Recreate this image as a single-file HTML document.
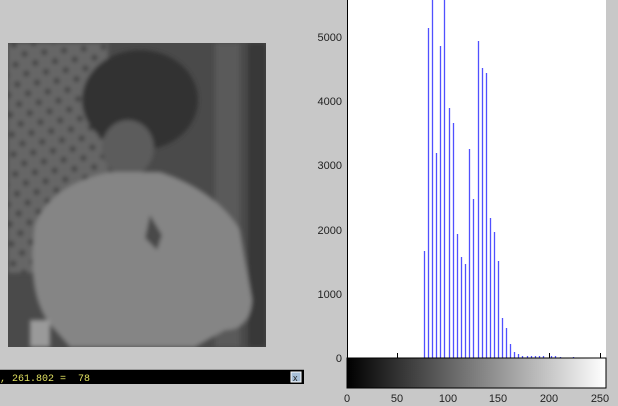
<!DOCTYPE html><html><head><style>body{margin:0;width:618px;height:406px;background:#c8c8c8;overflow:hidden}</style></head><body>
<svg width="618" height="406" xmlns="http://www.w3.org/2000/svg" style="display:block">
<defs>
<linearGradient id="cb" x1="0" x2="1"><stop offset="0" stop-color="#000"/><stop offset="1" stop-color="#fff"/></linearGradient>
<pattern id="lat" width="14" height="14" patternUnits="userSpaceOnUse" patternTransform="rotate(40)"><rect width="14" height="14" fill="#3c3c3c"/><rect width="9" height="14" fill="#666"/><rect width="14" height="9" fill="#666"/></pattern>
<filter id="bl"><feGaussianBlur stdDeviation="2"/></filter>
<clipPath id="ph"><rect x="8" y="43" width="258" height="304"/></clipPath>
</defs>
<!-- photo -->
<g clip-path="url(#ph)">
<rect x="8" y="43" width="258" height="304" fill="#4a4a4a"/>
<g filter="url(#bl)">
<rect x="8" y="43" width="100" height="230" fill="url(#lat)"/>
<rect x="215" y="43" width="25" height="304" fill="#5a5a5a"/>
<rect x="248" y="43" width="18" height="304" fill="#383838"/>
<ellipse cx="140" cy="100" rx="58" ry="50" fill="#333"/>
<ellipse cx="128" cy="148" rx="26" ry="28" fill="#5c5c5c"/>
<path d="M35 225 Q50 185 110 172 L160 172 Q215 190 240 230 L252 300 Q250 330 225 330 L195 347 L70 347 L55 330 Q25 300 35 225Z" fill="#858585"/>
<path d="M150 215 l12 20 l-5 15 l-12 -12z" fill="#4a4a4a"/>
<rect x="30" y="320" width="20" height="27" fill="#9a9a9a"/>
</g>
</g>
<!-- status bar -->
<rect x="0" y="370" width="304" height="14" fill="#000"/>
<rect x="0" y="369" width="304" height="1" fill="#9a9a9a"/>
<text x="0" y="381" font-family="Liberation Mono,monospace" font-size="10" fill="#e0e060" xml:space="preserve">, 261.802 =  78</text>
<rect x="291" y="372" width="10" height="10" fill="#a8c0d8" stroke="#fff" stroke-width="1"/>
<text x="293" y="381" font-family="Liberation Sans,sans-serif" font-size="9" fill="#222">x</text>
<!-- axes -->
<rect x="347" y="0" width="259" height="358" fill="#fff"/>
<line x1="347.5" y1="0" x2="347.5" y2="358" stroke="#000"/>
<g font-family="Liberation Sans,sans-serif" font-size="11" fill="#222" text-anchor="end">
<text x="342" y="41">5000</text><text x="342" y="105">4000</text><text x="342" y="169">3000</text><text x="342" y="234">2000</text><text x="342" y="298">1000</text><text x="342" y="362">0</text>
</g>
<g stroke="#5050ff" stroke-width="1.3">
<line x1="424.5" y1="358" x2="424.5" y2="251"/><line x1="428.5" y1="358" x2="428.5" y2="28"/><line x1="432.5" y1="358" x2="432.5" y2="0"/><line x1="436.5" y1="358" x2="436.5" y2="153"/><line x1="440.5" y1="358" x2="440.5" y2="46"/><line x1="444.5" y1="358" x2="444.5" y2="0"/><line x1="449.5" y1="358" x2="449.5" y2="108"/><line x1="453.5" y1="358" x2="453.5" y2="123"/><line x1="457.5" y1="358" x2="457.5" y2="234"/><line x1="461.5" y1="358" x2="461.5" y2="257"/><line x1="465.5" y1="358" x2="465.5" y2="264"/><line x1="469.5" y1="358" x2="469.5" y2="149"/><line x1="473.5" y1="358" x2="473.5" y2="199"/><line x1="478.5" y1="358" x2="478.5" y2="41"/><line x1="482.5" y1="358" x2="482.5" y2="68"/><line x1="486.5" y1="358" x2="486.5" y2="73"/><line x1="490.5" y1="358" x2="490.5" y2="218"/><line x1="494.5" y1="358" x2="494.5" y2="232"/><line x1="498.5" y1="358" x2="498.5" y2="261"/><line x1="502.5" y1="358" x2="502.5" y2="318"/><line x1="506.5" y1="358" x2="506.5" y2="328"/><line x1="510.5" y1="358" x2="510.5" y2="344"/><line x1="514.5" y1="358" x2="514.5" y2="352"/><line x1="518.5" y1="358" x2="518.5" y2="354"/><line x1="522.5" y1="358" x2="522.5" y2="356"/><line x1="527.5" y1="358" x2="527.5" y2="356"/><line x1="531.5" y1="358" x2="531.5" y2="356"/><line x1="535.5" y1="358" x2="535.5" y2="356"/><line x1="539.5" y1="358" x2="539.5" y2="356"/><line x1="543.5" y1="358" x2="543.5" y2="356"/><line x1="551.5" y1="358" x2="551.5" y2="356"/><line x1="555.5" y1="358" x2="555.5" y2="356"/><line x1="560.5" y1="358" x2="560.5" y2="357"/><line x1="573.5" y1="358" x2="573.5" y2="357"/>
</g>
<!-- colorbar -->
<rect x="347" y="358" width="259" height="30" fill="url(#cb)" stroke="#000"/>
<g stroke="#000"><line x1="397.5" y1="353" x2="397.5" y2="358"/><line x1="549.5" y1="353" x2="549.5" y2="358"/><line x1="600.5" y1="353" x2="600.5" y2="358"/></g>
<g font-family="Liberation Sans,sans-serif" font-size="11" fill="#222" text-anchor="middle">
<text x="347" y="402">0</text><text x="397" y="402">50</text><text x="448" y="402">100</text><text x="498" y="402">150</text><text x="549" y="402">200</text><text x="600" y="402">250</text>
</g>
</svg>
</body></html>
